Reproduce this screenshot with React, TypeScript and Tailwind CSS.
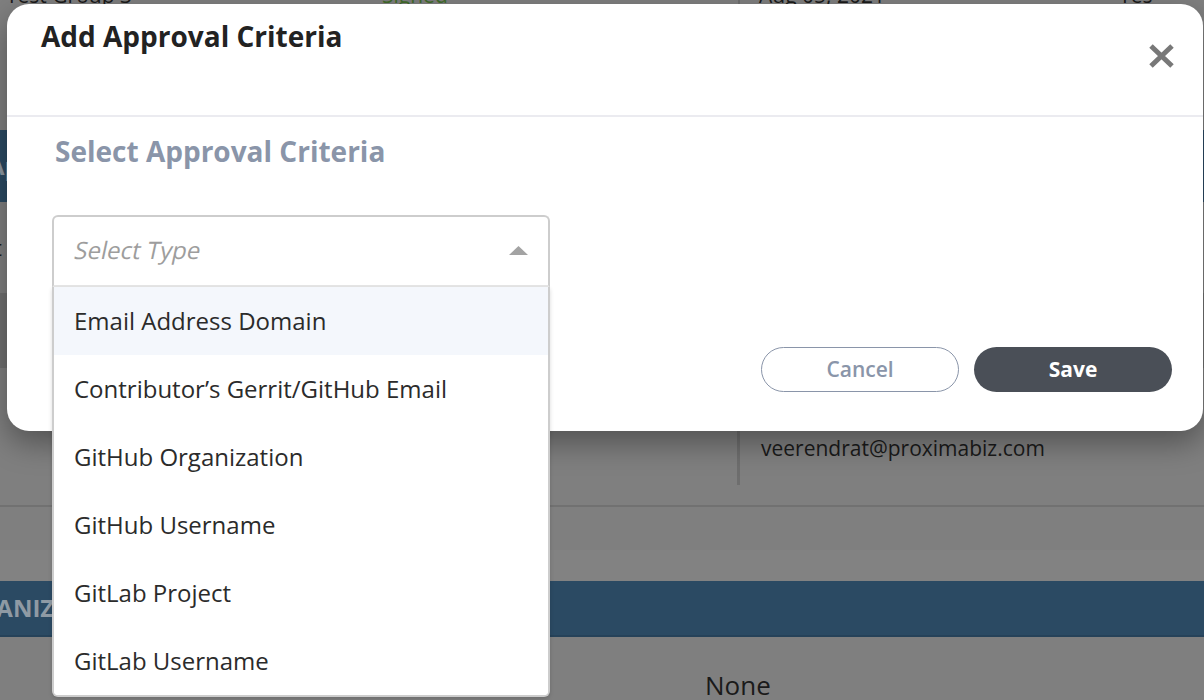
import React from "react";

const OPTIONS = [
  "Email Address Domain",
  "Contributor’s Gerrit/GitHub Email",
  "GitHub Organization",
  "GitHub Username",
  "GitLab Project",
  "GitLab Username",
];

// Page behind the overlay, drawn already dimmed
const BackdropPage: React.FC = () => (
  <div className="flex flex-col text-[#1a1a1a]">
    {/* table row cut at the top */}
    <div className="flex h-[130px] items-start text-[21px]">
      <span className="-mt-[19px] ml-[6px] w-[376px] leading-[28px]">Test Group 3</span>
      <span className="-mt-[19px] w-[356px] leading-[28px] text-[#3f6b2a]">Signed</span>
      <div className="h-[6px] w-[2px] bg-[#6e6e6e]" />
      <span className="-mt-[19px] ml-[19px] w-[360px] leading-[28px]">Aug 05, 2021</span>
      <span className="-mt-[19px] leading-[28px]">Yes</span>
    </div>
    <div className="flex h-[72px] items-center bg-[#2b4a63] text-[24px] font-bold text-[#8f9aa4]">
      <span className="-ml-[12px]">Approval</span>
    </div>
    <div className="flex h-[91px] items-center text-[22px]">
      <span className="-ml-[6px]">t</span>
    </div>
    <div className="h-[75px] bg-[#707070]" />
    <div className="h-[22px]" />
    <div className="flex h-[115px]">
      <div className="ml-[737px] mt-[8px] h-[87px] w-[3px] bg-[#6e6e6e]" />
      <span className="ml-[21px] mt-[44px] text-[21px] leading-[28px]">veerendrat@proximabiz.com</span>
    </div>
    <div className="h-[2px] bg-[#717171]" />
    <div className="h-[43px]" />
    <div className="h-[31px] bg-[#828282]" />
    <div className="flex h-[56px] items-center border-b-2 border-[#264259] bg-[#2b4a63] text-[24px] font-bold text-[#8f9aa4]">
      <span className="-ml-[56px]">ORGANIZATIONS</span>
    </div>
    <div className="flex h-[80px] items-start">
      <span className="ml-[705px] mt-[30px] text-[26px] leading-[36px]">None</span>
    </div>
  </div>
);

const SelectType: React.FC = () => (
  <div className="relative w-[498px]">
    <div className="flex h-[72px] items-center justify-between rounded-t-[6px] border-2 border-[#cdcdcd] border-b-[#e6e6e6] pb-[2px] pl-[20px] pr-[20px]">
      <span className="ml-[1px] inline-block -skew-x-[12deg] text-[24px] text-[#9d9d9d]">Select Type</span>
      <svg width="19" height="9" viewBox="0 0 19 9">
        <path d="M9.5 0 L19 9 L0 9 Z" fill="#a3a3a3" />
      </svg>
    </div>
    <div className="absolute left-0 right-0 top-full z-10 flex flex-col overflow-hidden rounded-b-[6px] border-2 border-t-0 border-[#cdcdcd] bg-white shadow-[0_2px_4px_rgba(0,0,0,0.15)]">
      {OPTIONS.map((o, i) => (
        <div
          key={o}
          className={`flex h-[68px] items-center pl-[20px] text-[24px] text-[#2b2b2b] ${i === 0 ? "bg-[#f4f7fc]" : "bg-white"}`}
        >
          {o}
        </div>
      ))}
    </div>
  </div>
);

export default function App() {
  return (
    <div className="relative h-[700px] w-[1204px] overflow-hidden bg-[#7f7f7f] font-['Open_Sans',sans-serif]">
      <BackdropPage />

      {/* Modal */}
      <div className="absolute left-[7px] top-[4px] flex w-[1196px] flex-col rounded-[22px] bg-white shadow-[0_12px_30px_rgba(0,0,0,0.35)]">
        <header className="flex h-[113px] items-start justify-between border-b-2 border-[#ebebf0] pl-[34px] pr-[28px] pt-[13px]">
          <h2 className="text-[28px] font-bold leading-[38px] text-[#222]">Add Approval Criteria</h2>
          <svg width="27" height="26" viewBox="0 0 27 26" className="mt-[26px]">
            <path d="M3 3 L24 23 M24 3 L3 23" stroke="#787878" strokeWidth="5" />
          </svg>
        </header>

        <div className="flex flex-col px-[45px] pb-[39px] pt-[15px]">
          <h3 className="ml-[3px] text-[28px] font-bold leading-[38px] text-[#8a95a9]">
            Select Approval Criteria
          </h3>
          <div className="mt-[45px]">
            <SelectType />
          </div>
          <div className="-mr-[14px] mt-[60px] flex justify-end gap-[15px]">
            <button className="h-[45px] w-[198px] rounded-full border border-[#8a95a9] bg-white text-[21px] font-semibold text-[#8a95a9]">
              Cancel
            </button>
            <button className="h-[45px] w-[198px] rounded-full bg-[#4a4f57] text-[21px] font-bold text-white">
              Save
            </button>
          </div>
        </div>
      </div>
    </div>
  );
}
